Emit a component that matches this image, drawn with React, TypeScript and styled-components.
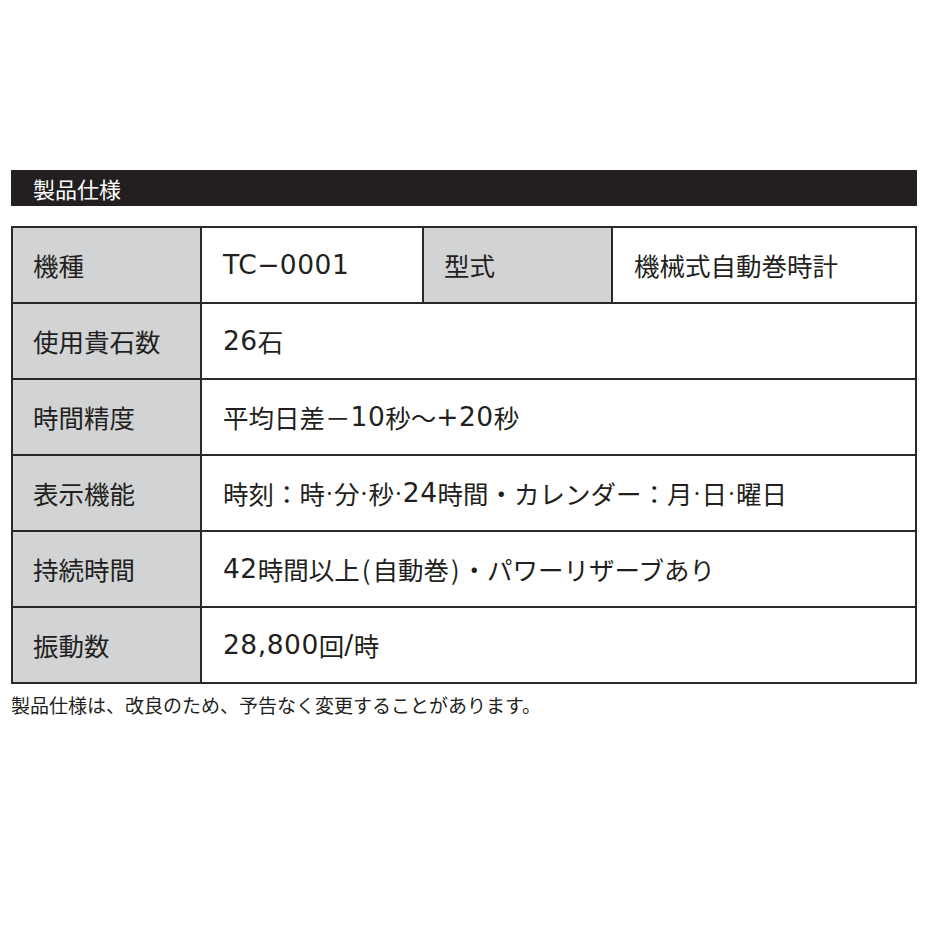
import React from "react";
import styled, { createGlobalStyle } from "styled-components";

const Global = createGlobalStyle`
  html, body { margin: 0; padding: 0; background: #ffffff; }
  body { font-family: "Noto Sans CJK JP", "Noto Sans", sans-serif; color: #231f20; }
`;

const Page = styled.div`
  width: 928px;
  height: 928px;
  box-sizing: border-box;
  padding: 170px 0 0 11px;
`;

const Section = styled.section`
  width: 906px;
  display: flex;
  flex-direction: column;
`;

const TitleBar = styled.h2`
  margin: 0;
  height: 36px;
  background: #231f20;
  color: #ffffff;
  font-size: 22px;
  font-weight: 400;
  line-height: 36px;
  padding-left: 22px;
`;

const Table = styled.div`
  margin-top: 20px;
  display: grid;
  grid-template-columns: 187px 220px 187px 1fr;
  grid-auto-rows: 74px;
  gap: 2px;
  background: #2b2829;
  border: 2px solid #2b2829;
`;

const Cell = styled.div<{ $label?: boolean; $span?: number }>`
  display: flex;
  align-items: center;
  padding-left: ${(p) => (p.$label ? 20 : 21)}px;
  background: ${(p) => (p.$label ? "#d1d3d4" : "#ffffff")};
  font-size: 25.5px;
  line-height: 1;
  color: #231f20;
  white-space: nowrap;
  grid-column: ${(p) => (p.$span ? `span ${p.$span}` : "auto")};
`;

const Num = styled.span`
  font-family: "DejaVu Sans", "Noto Sans CJK JP", sans-serif;
  font-size: 1.04em;
  letter-spacing: 0.5px;
`;

const Dot = styled.span`
  font-size: 0.7em;
  vertical-align: 0.2em;
`;

const Paren = styled.span`
  margin: 0 2px;
`;

const Note = styled.p`
  margin: 9px 0 0 0;
  font-size: 19px;
  line-height: 24px;
  color: #231f20;
`;

function renderText(s: string) {
  const parts = s.split(/([0-9A-Za-z,+\-−/]+|･|[()])/g).filter((x) => x !== "");
  return parts.map((p, i) => {
    if (p === "･") return <Dot key={i}>･</Dot>;
    if (p === "(" || p === ")") return <Paren key={i}>{p}</Paren>;
    if (/^[0-9A-Za-z,+\-−/]+$/.test(p)) return <Num key={i}>{p}</Num>;
    return <React.Fragment key={i}>{p}</React.Fragment>;
  });
}

const rows: [string, string][] = [
  ["使用貴石数", "26石"],
  ["時間精度", "平均日差－10秒〜+20秒"],
  ["表示機能", "時刻：時･分･秒･24時間・カレンダー：月･日･曜日"],
  ["持続時間", "42時間以上(自動巻)・パワーリザーブあり"],
  ["振動数", "28,800回/時"],
];

export default function App() {
  return (
    <Page>
      <Global />
      <Section>
        <TitleBar>製品仕様</TitleBar>
        <Table>
          <Cell $label>機種</Cell>
          <Cell>{renderText("TC−0001")}</Cell>
          <Cell $label>型式</Cell>
          <Cell>機械式自動巻時計</Cell>
          {rows.map(([k, v]) => (
            <React.Fragment key={k}>
              <Cell $label>{k}</Cell>
              <Cell $span={3}>{renderText(v)}</Cell>
            </React.Fragment>
          ))}
        </Table>
        <Note>製品仕様は、改良のため、予告なく変更することがあります。</Note>
      </Section>
    </Page>
  );
}
